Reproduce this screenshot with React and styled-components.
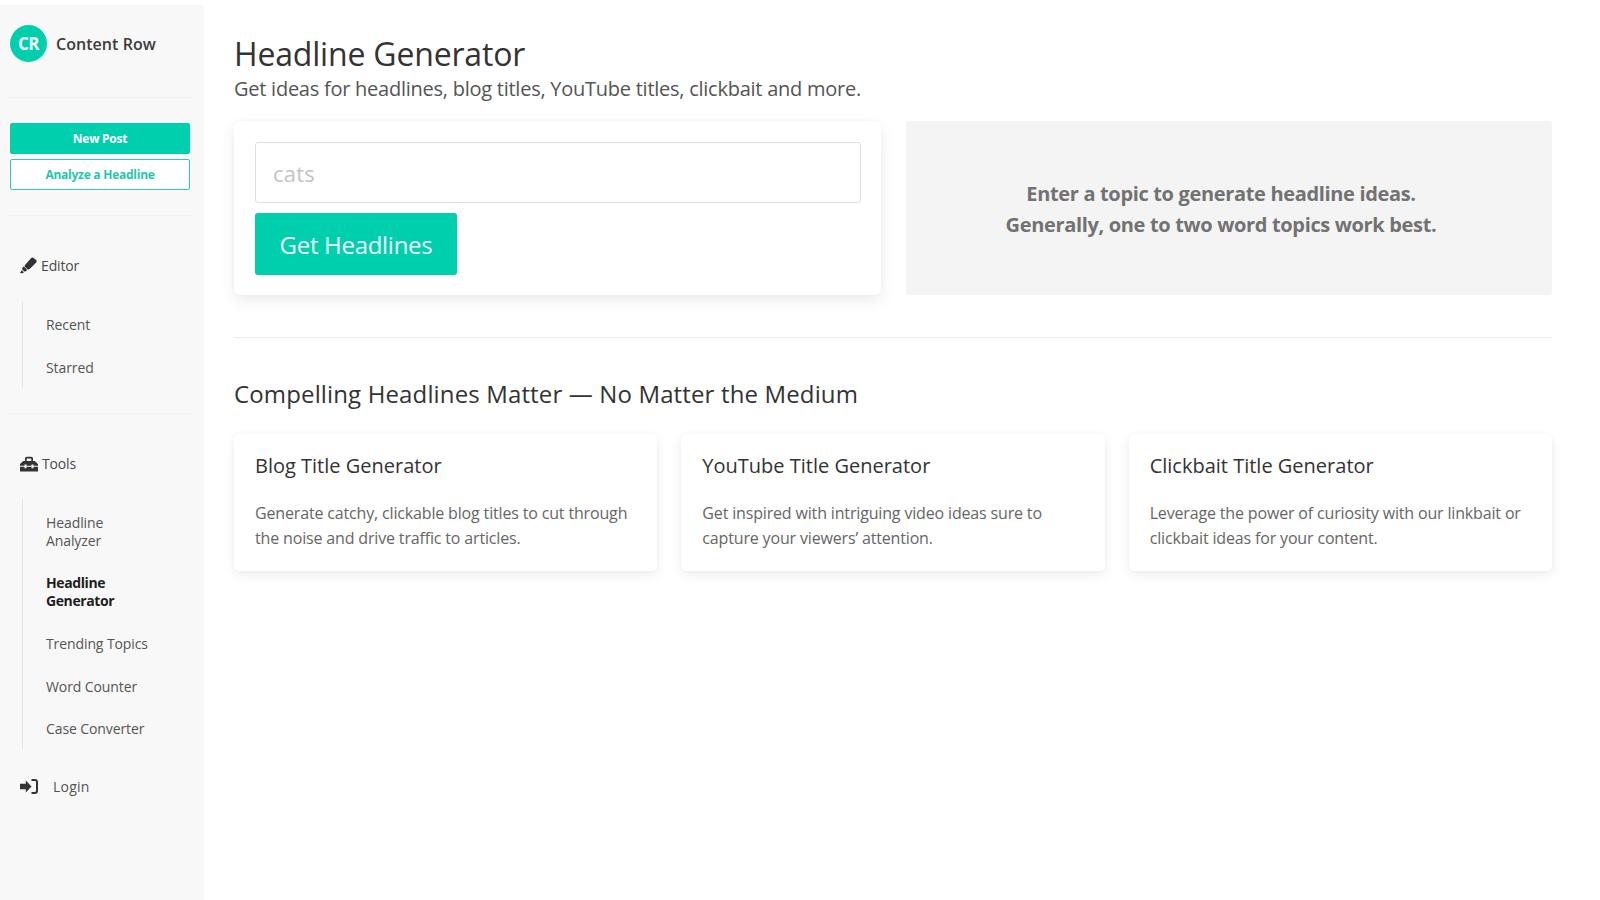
import styled, { createGlobalStyle } from "styled-components";

const GlobalStyle = createGlobalStyle`
  html, body {
    margin: 0;
    height: 100%;
    background: #ffffff;
  }
  body {
    font-family: "Open Sans", "Noto Sans", sans-serif;
    color: #333333;
  }
  * {
    box-sizing: border-box;
  }
`;

function HighlighterIcon() {
  return (
    <Icon width="17" height="17" viewBox="0 0 17 17">
      <path d="M4.800 8.200 11.200 1.100c.7-.8 1.600-.9 2.400-.2l2.500 2.200c.8.700.8 1.700.1 2.400L9.400 12.300l-1.600.3-3.300-3z" />
      <path d="M3.800 9.500l3.400 3.200-1.200 1.500-1.800.2-2-1.900.1-1.700z" />
      <path d="M1.700 13.300l2.100 2-.9 1L0 16z" />
    </Icon>
  );
}

function ToolboxIcon() {
  return (
    <Icon width="18" height="16" viewBox="0 0 18 16">
      <path d="M5 5V2.700C5 1.500 5.900.8 7 .8h4c1.100 0 2 .7 2 1.900V5h1.800L18 8v1.700h-4.500V8.500h-2v1.200h-5V8.500h-2v1.200H0V8l3.200-3H5zm1.700 0h4.600V3c0-.3-.2-.5-.5-.5H7.200c-.3 0-.5.2-.5.5v2z" />
      <path d="M0 10.700h4.500v1.500h2v-1.500h5v1.500h2v-1.500H18V15.500H0z" />
    </Icon>
  );
}

function LoginIcon() {
  return (
    <Icon width="18" height="15" viewBox="0 0 18 15">
      <path d="M0 4.700h5.800V1.500l5.700 6-5.700 6v-3.200H0z" />
      <path d="M11.500 0H15c1.700 0 3 1.300 3 3v9c0 1.700-1.300 3-3 3h-3.500v-2.100H15c.6 0 1-.4 1-.9V3c0-.5-.4-.9-1-.9h-3.500z" />
    </Icon>
  );
}

function App() {
  return (
    <Page>
      <GlobalStyle />
      <Sidebar>
        <Brand>
          <Avatar>CR</Avatar>
          <BrandName>Content Row</BrandName>
        </Brand>
        <Divider />
        <Actions>
          <FilledAction>New Post</FilledAction>
          <OutlineAction>Analyze a Headline</OutlineAction>
        </Actions>
        <Divider />
        <NavHeading $top={39}>
          <HighlighterIcon />
          Editor
        </NavHeading>
        <SubNav $top={26}>
          <SubItem>Recent</SubItem>
          <SubItem>Starred</SubItem>
        </SubNav>
        <Divider $top={25} />
        <NavHeading $top={40}>
          <ToolboxIcon />
          Tools
        </NavHeading>
        <SubNav $top={25}>
          <SubItem>
            Headline
            <br />
            Analyzer
          </SubItem>
          <SubItem $active>
            Headline
            <br />
            Generator
          </SubItem>
          <SubItem>Trending Topics</SubItem>
          <SubItem>Word Counter</SubItem>
          <SubItem>Case Converter</SubItem>
        </SubNav>
        <LoginRow>
          <LoginIcon />
          Login
        </LoginRow>
      </Sidebar>
      <Main>
        <Title>Headline Generator</Title>
        <Subtitle>
          Get ideas for headlines, blog titles, YouTube titles, clickbait and
          more.
        </Subtitle>
        <TopRow>
          <FormCard>
            <TopicInput placeholder="cats" />
            <SubmitButton>Get Headlines</SubmitButton>
          </FormCard>
          <Hint>
            Enter a topic to generate headline ideas.
            <br />
            Generally, one to two word topics work best.
          </Hint>
        </TopRow>
        <Rule />
        <SectionTitle>
          Compelling Headlines Matter — No Matter the Medium
        </SectionTitle>
        <CardRow>
          <InfoCard>
            <CardTitle>Blog Title Generator</CardTitle>
            <CardText>
              Generate catchy, clickable blog titles to cut through the noise
              and drive traffic to articles.
            </CardText>
          </InfoCard>
          <InfoCard>
            <CardTitle>YouTube Title Generator</CardTitle>
            <CardText>
              Get inspired with intriguing video ideas sure to capture your
              viewers’ attention.
            </CardText>
          </InfoCard>
          <InfoCard>
            <CardTitle>Clickbait Title Generator</CardTitle>
            <CardText>
              Leverage the power of curiosity with our linkbait or clickbait
              ideas for your content.
            </CardText>
          </InfoCard>
        </CardRow>
      </Main>
    </Page>
  );
}

const Page = styled.div`
  display: flex;
  align-items: stretch;
  width: 1600px;
  height: 900px;
  padding-top: 5px;
  overflow: hidden;
`;

const Sidebar = styled.aside`
  flex: 0 0 204px;
  padding: 20px 14px 0 10px;
  background: #f8f8f8;
`;

const Brand = styled.div`
  display: flex;
  align-items: center;
  gap: 9px;
`;

const Avatar = styled.div`
  display: flex;
  align-items: center;
  justify-content: center;
  width: 37px;
  height: 37px;
  border-radius: 50%;
  background: #00cfae;
  color: #f4fffc;
  font-size: 17px;
  font-weight: 700;
  letter-spacing: -0.6px;
`;

const BrandName = styled.div`
  font-size: 16px;
  font-weight: 600;
  letter-spacing: 0.05px;
  color: #3c3c3c;
`;

const Divider = styled.div`
  height: 1px;
  margin: ${(p) => p.$top ?? 35}px -2px 0;
  background: #f1f1f1;
`;

const Actions = styled.div`
  display: flex;
  flex-direction: column;
  gap: 5px;
  margin: 25px 0 25px;

  & + ${Divider} {
    margin-top: 0;
  }
`;

const FilledAction = styled.button`
  height: 31px;
  padding: 0;
  border: 1px solid #00cfae;
  border-radius: 2px;
  background: #00cfae;
  color: #ffffff;
  font-family: inherit;
  font-size: 12px;
  font-weight: 700;
  letter-spacing: -0.25px;
`;

const OutlineAction = styled(FilledAction)`
  background: #ffffff;
  color: #1fc8a9;
  border-color: #35c9ae;
`;

const Icon = styled.svg`
  flex: none;
  fill: #333333;
`;

const NavHeading = styled.div`
  display: flex;
  align-items: center;
  gap: 4px;
  height: 20px;
  margin: ${(p) => p.$top}px 0 0 10px;
  font-size: 14px;
  letter-spacing: -0.15px;
  color: #4a4a4a;
`;

const SubNav = styled.div`
  display: flex;
  flex-direction: column;
  gap: 24.7px;
  margin: ${(p) => p.$top}px 0 0 12px;
  padding: 15px 0 11px 23px;
  border-left: 1px solid #e6e6e6;
`;

const SubItem = styled.div`
  font-size: 14px;
  line-height: 18px;
  letter-spacing: ${(p) => (p.$active ? "-0.4px" : "-0.1px")};
  font-weight: ${(p) => (p.$active ? 700 : 400)};
  color: ${(p) => (p.$active ? "#1e1e1e" : "#555555")};
`;

const LoginRow = styled.div`
  display: flex;
  align-items: center;
  gap: 15px;
  height: 20px;
  margin: 27px 0 0 10px;
  font-size: 14px;
  letter-spacing: 0.2px;
  color: #555555;
`;

const Main = styled.main`
  flex: 1;
  padding: 29px 48px 0 30px;
`;

const Title = styled.h1`
  margin: 0;
  font-size: 32px;
  line-height: 40px;
  font-weight: 400;
  letter-spacing: -0.18px;
  color: #333333;
`;

const Subtitle = styled.p`
  margin: 0;
  font-size: 20px;
  line-height: 30px;
  letter-spacing: -0.25px;
  color: #555555;
`;

const TopRow = styled.div`
  display: grid;
  grid-template-columns: 647px 1fr;
  gap: 25px;
  height: 174px;
  margin-top: 17px;
`;

const FormCard = styled.div`
  display: flex;
  flex-direction: column;
  align-items: flex-start;
  gap: 10px;
  padding: 21px 20px 20px 21px;
  border-radius: 6px;
  background: #ffffff;
  box-shadow: 0 6px 16px rgba(0, 0, 0, 0.08), 0 0 4px rgba(0, 0, 0, 0.03);
`;

const TopicInput = styled.input`
  width: 100%;
  height: 61px;
  padding: 0 17px;
  border: 1px solid #e0e0e0;
  border-radius: 3px;
  font-family: inherit;
  font-size: 22px;
  letter-spacing: 0.2px;
  outline: none;

  &::placeholder {
    color: #c4c4c4;
  }
`;

const SubmitButton = styled.button`
  width: 202px;
  height: 62px;
  padding: 0;
  border: none;
  border-radius: 3px;
  background: #00cfae;
  color: #f2fffb;
  font-family: inherit;
  font-size: 24px;
  letter-spacing: -0.3px;
`;

const Hint = styled.div`
  display: flex;
  align-items: center;
  justify-content: center;
  padding: 2px 16px 0 0;
  border-radius: 3px;
  background: #f4f4f4;
  color: #727272;
  font-size: 20px;
  line-height: 31px;
  font-weight: 700;
  letter-spacing: -0.34px;
  text-align: center;
`;

const Rule = styled.div`
  height: 1px;
  margin-top: 42px;
  background: #ececec;
`;

const SectionTitle = styled.h2`
  margin: 40px 0 0;
  font-size: 24px;
  line-height: 32px;
  font-weight: 400;
  letter-spacing: 0.14px;
  color: #333333;
`;

const CardRow = styled.div`
  display: grid;
  grid-template-columns: repeat(3, 1fr);
  gap: 24px;
  margin-top: 24px;
`;

const InfoCard = styled.div`
  height: 137px;
  padding: 18px 21px;
  border-radius: 5px;
  background: #ffffff;
  box-shadow: 0 4px 12px rgba(0, 0, 0, 0.07), 0 0 4px rgba(0, 0, 0, 0.03);
`;

const CardTitle = styled.h3`
  margin: 0;
  font-size: 20px;
  line-height: 28px;
  font-weight: 400;
  letter-spacing: 0;
  color: #333333;
`;

const CardText = styled.p`
  margin: 21px 0 0;
  font-size: 16px;
  line-height: 24.5px;
  letter-spacing: -0.16px;
  color: #666666;
`;

export default App;
